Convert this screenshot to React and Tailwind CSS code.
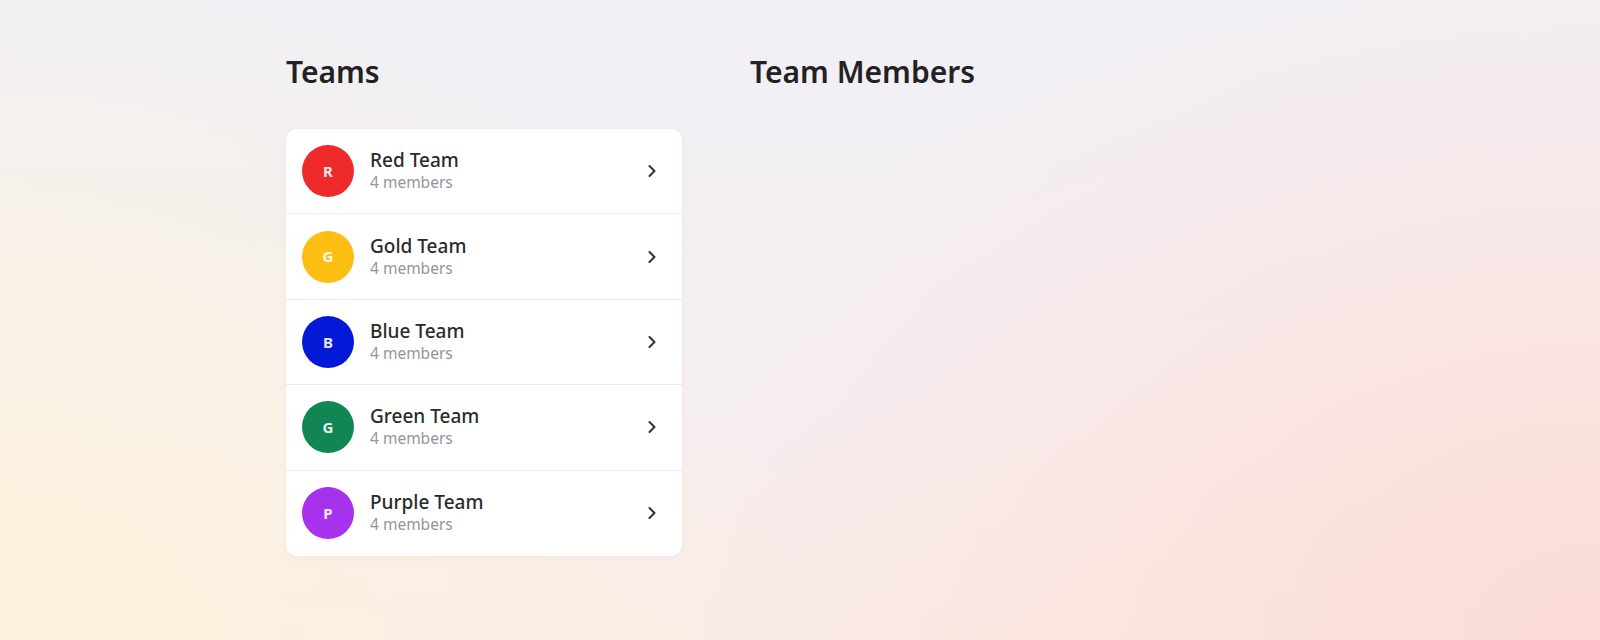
import { ChevronRight } from "lucide-react";

const teams = [
  { name: "Red Team", letter: "R", color: "bg-[#ee2a2a]" },
  { name: "Gold Team", letter: "G", color: "bg-[#fdbe12]" },
  { name: "Blue Team", letter: "B", color: "bg-[#0418d8]" },
  { name: "Green Team", letter: "G", color: "bg-[#128555]" },
  { name: "Purple Team", letter: "P", color: "bg-[#a732ee]" },
];

function TeamRow({ team, last }) {
  return (
    <button
      type="button"
      className={`flex h-[85.4px] w-full items-center gap-4 pl-4 pr-5 text-left ${last ? "" : "border-b border-[#efeaec]"}`}
    >
      <div
        className={`flex h-13 w-13 shrink-0 items-center justify-center rounded-full text-[15px] font-bold text-white/90 ${team.color}`}
      >
        {team.letter}
      </div>
      <div className="flex flex-1 flex-col">
        <span className="text-[19px] leading-[23px] font-medium text-[#2b2b2b]">{team.name}</span>
        <span className="text-[15.5px] leading-[21px] text-[#92959c]">4 members</span>
      </div>
      <ChevronRight size={20} strokeWidth={2.5} className="text-[#333]" />
    </button>
  );
}

export default function App() {
  return (
    <div
      className="min-h-screen w-full bg-[radial-gradient(ellipse_50%_110%_at_0%_100%,#fcf3dc_0%,#fcf3dc00_100%),radial-gradient(ellipse_60%_110%_at_100%_100%,#fcdcd6_0%,#fcdcd600_100%),linear-gradient(180deg,#f1f0f5_0%,#f5eff2_60%,#f9ece8_100%)]"
      style={{ fontFamily: "'Noto Sans', sans-serif" }}
    >
      <div className="flex gap-[68px] pl-[286px] pt-[54px]">
        <div className="flex w-[396px] flex-col">
          <h1 className="text-3xl leading-9 font-semibold text-[#222]">Teams</h1>
          <div className="mt-[39px] overflow-hidden rounded-xl bg-white shadow-[0_2px_8px_rgba(0,0,0,0.03)]">
            {teams.map((t, i) => (
              <TeamRow key={t.name} team={t} last={i === teams.length - 1} />
            ))}
          </div>
        </div>
        <div className="flex flex-col">
          <h1 className="text-3xl leading-9 font-semibold text-[#222]">Team Members</h1>
        </div>
      </div>
    </div>
  );
}
